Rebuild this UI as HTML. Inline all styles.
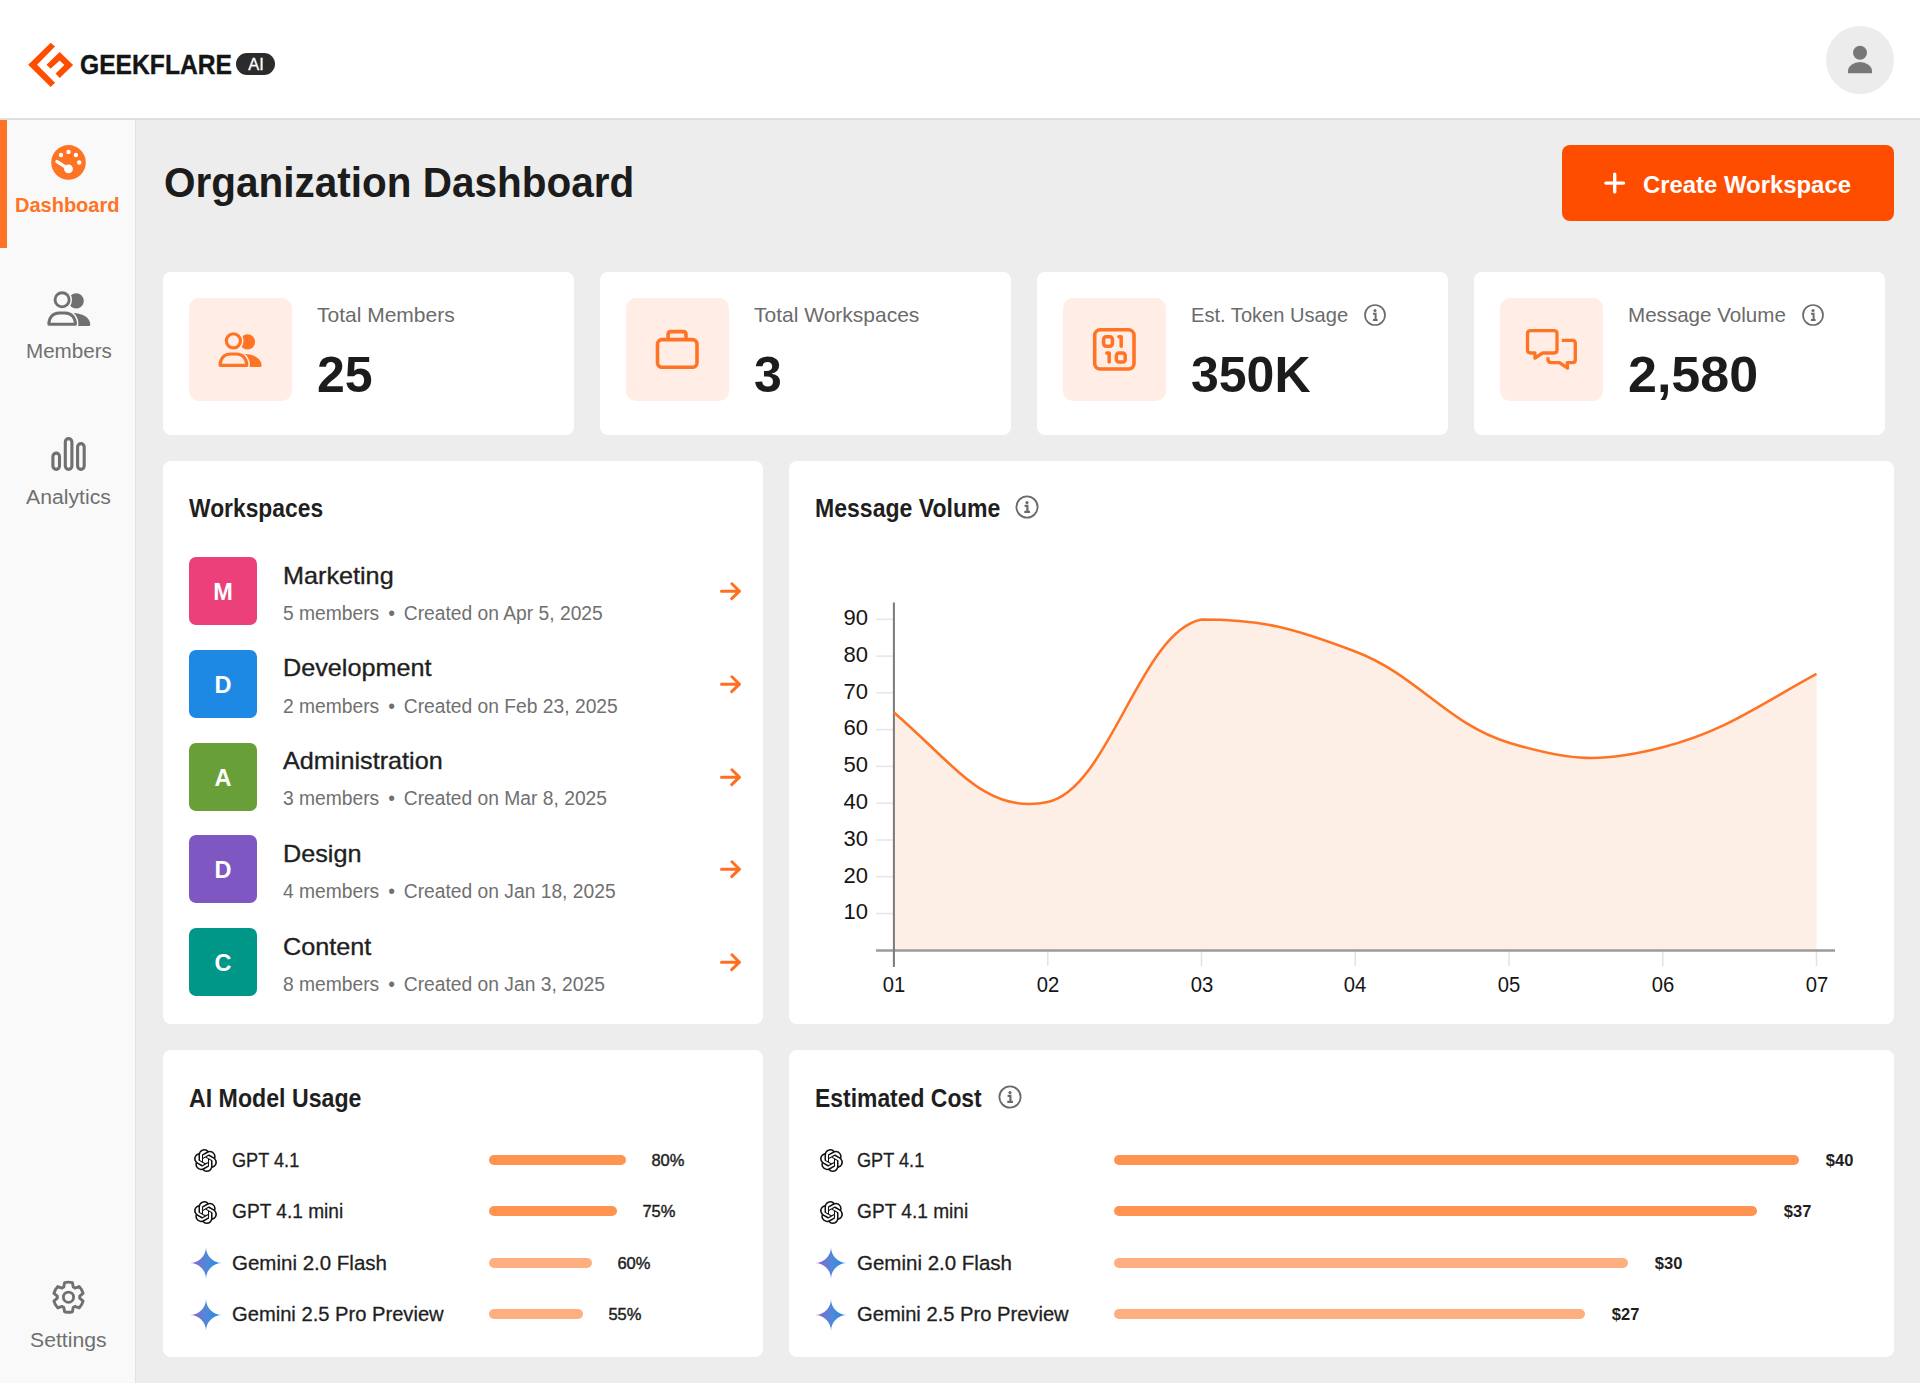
<!DOCTYPE html>
<html><head><meta charset="utf-8"><title>Organization Dashboard</title>
<style>
html,body{margin:0;padding:0;width:1920px;height:1383px;overflow:hidden;background:#ededed;font-family:"Liberation Sans",sans-serif;}
.t{position:absolute;line-height:1;white-space:nowrap;}
</style></head><body>
<div style="position:absolute;left:0px;top:0px;width:1920px;height:118px;background:#fff;border-radius:0px;"></div>
<div style="position:absolute;left:0px;top:118px;width:1920px;height:2px;background:#dedede;border-radius:0px;"></div>
<svg style="position:absolute;left:0;top:0" width="300" height="118" viewBox="0 0 300 118">
<path fill="#FF4D00" d="M50.7,42.8 L28.2,64.7 L50.7,87 L55,82.7 L37.1,64.7 L55,46.6 Z"/>
<path fill="#FF4D00" d="M46.5,64.7 L59.7,51.9 L73.1,64.9 L59.7,78 L55.6,73.6 L64.3,64.9 L59.7,60.6 L50.6,68.8 Z"/>
</svg>
<div class="t" style="left:80.0px;top:50.9px;font-size:28px;color:#151515;font-weight:bold;transform:scaleX(0.88);transform-origin:0 0;-webkit-text-stroke:0.4px #151515;">GEEKFLARE</div>
<div style="position:absolute;left:236px;top:53px;width:39px;height:22px;background:#2b2b2b;border-radius:11px;"></div>
<div class="t" style="left:248.3px;top:55.6px;font-size:16.5px;color:#fff;font-weight:normal;-webkit-text-stroke:0.3px #fff;">AI</div>
<div style="position:absolute;left:1826px;top:26px;width:68px;height:68px;background:#ececec;border-radius:34px;"></div>
<svg style="position:absolute;left:1826px;top:26px" width="68" height="68" viewBox="0 0 68 68">
<circle cx="34" cy="26.8" r="7" fill="#777"/>
<path d="M22,47.3 L22,45 A12,9 0 0 1 46,45 L46,47.3 Z" fill="#777"/>
</svg>
<div style="position:absolute;left:0px;top:120px;width:136px;height:1263px;background:#f9f9f9;border-radius:0px;"></div>
<div style="position:absolute;left:135px;top:120px;width:1px;height:1263px;background:#e2e2e2;border-radius:0px;"></div>
<div style="position:absolute;left:0px;top:120px;width:7px;height:128px;background:#FF7424;border-radius:0px;"></div>
<svg style="position:absolute;left:0;top:120px" width="136" height="380" viewBox="0 120 136 380">
<circle cx="68.5" cy="162.4" r="17.3" fill="#FF7424"/>
<circle cx="68.5" cy="151.9" r="2.2" fill="#fff"/>
<circle cx="61" cy="155" r="2.2" fill="#fff"/>
<circle cx="75.9" cy="155" r="2.2" fill="#fff"/>
<circle cx="79.2" cy="162.5" r="2.2" fill="#fff"/>
<line x1="57" y1="161.6" x2="68.5" y2="168.9" stroke="#fff" stroke-width="3.4" stroke-linecap="round"/>
<circle cx="68.5" cy="168.9" r="4.4" fill="#fff"/>
<g transform="translate(62.1,299.8) scale(1.0)">
<circle cx="14.1" cy="1.1" r="7.6" fill="#707070"/>
<path d="M8,13 C21,13 27.8,18 28.2,24.6 Q28.2,26.1 26.6,26.1 L8,26.1 Z" fill="#707070"/>
<circle cx="0" cy="0" r="7.05" fill="#f9f9f9" stroke="#f9f9f9" stroke-width="5.9"/>
<path d="M-13.3,24.5 C-13.3,18 -9.5,13.2 -3,13.2 L3,13.2 C9.5,13.2 13.4,18 13.4,24.5 Z" fill="#f9f9f9" stroke="#f9f9f9" stroke-width="5.9" stroke-linejoin="round"/>
<circle cx="0" cy="0" r="7.05" fill="none" stroke="#707070" stroke-width="2.9"/>
<path d="M-13.3,24.5 C-13.3,18 -9.5,13.2 -3,13.2 L3,13.2 C9.5,13.2 13.4,18 13.4,24.5 Z" fill="none" stroke="#707070" stroke-width="2.9" stroke-linejoin="round"/>
</g>
<rect x="52.9" y="453.1" width="6.6" height="16.3" rx="3.3" fill="none" stroke="#707070" stroke-width="3.1"/>
<rect x="65.3" y="438.6" width="6.6" height="30.8" rx="3.3" fill="none" stroke="#707070" stroke-width="3.1"/>
<rect x="77.6" y="443.6" width="6.6" height="25.8" rx="3.3" fill="none" stroke="#707070" stroke-width="3.1"/>
</svg>
<div class="t" style="left:15.0px;top:195.4px;font-size:20px;color:#FF7424;font-weight:bold;">Dashboard</div>
<div class="t" style="left:25.8px;top:341.4px;font-size:20px;color:#707070;font-weight:normal;transform:scaleX(1.03);transform-origin:0 0;">Members</div>
<div class="t" style="left:25.8px;top:486.8px;font-size:20px;color:#707070;font-weight:normal;transform:scaleX(1.06);transform-origin:0 0;">Analytics</div>
<svg style="position:absolute;left:0;top:1240px" width="136" height="120" viewBox="0 1240 136 120">
<path fill="none" stroke="#707070" stroke-width="2.9" stroke-linejoin="round" d="M63.77,1287.05 L64.59,1282.61 A15.1,15.1 0 0 1 72.41,1282.61 L73.23,1287.05 A11.2,11.2 0 0 1 74.92,1288.03 L79.18,1286.52 A15.1,15.1 0 0 1 83.09,1293.29 L79.66,1296.22 A11.2,11.2 0 0 1 79.66,1298.18 L83.09,1301.11 A15.1,15.1 0 0 1 79.18,1307.88 L74.92,1306.37 A11.2,11.2 0 0 1 73.23,1307.35 L72.41,1311.79 A15.1,15.1 0 0 1 64.59,1311.79 L63.77,1307.35 A11.2,11.2 0 0 1 62.08,1306.37 L57.82,1307.88 A15.1,15.1 0 0 1 53.91,1301.11 L57.34,1298.18 A11.2,11.2 0 0 1 57.34,1296.22 L53.91,1293.29 A15.1,15.1 0 0 1 57.82,1286.52 L62.08,1288.03 A11.2,11.2 0 0 1 63.77,1287.05 Z"/>
<circle cx="68.5" cy="1297.2" r="5.1" fill="none" stroke="#707070" stroke-width="2.8"/>
</svg>
<div class="t" style="left:30.0px;top:1330.4px;font-size:20px;color:#707070;font-weight:normal;transform:scaleX(1.06);transform-origin:0 0;">Settings</div>
<div class="t" style="left:164.0px;top:161.7px;font-size:42px;color:#1c1c1c;font-weight:bold;transform:scaleX(0.964);transform-origin:0 0;">Organization Dashboard</div>
<div style="position:absolute;left:1562px;top:145px;width:332px;height:76px;background:#FF4D00;border-radius:8px;"></div>
<svg style="position:absolute;left:1600px;top:168px" width="30" height="30" viewBox="0 0 30 30">
<path d="M14.7,6.3 V23.9 M5.9,15.1 H23.5" stroke="#fff" stroke-width="3.4" stroke-linecap="round"/>
</svg>
<div class="t" style="left:1643.0px;top:172.9px;font-size:24px;color:#fff;font-weight:bold;transform:scaleX(0.995);transform-origin:0 0;">Create Workspace</div>
<div style="position:absolute;left:163px;top:272px;width:411px;height:163px;background:#fff;border-radius:8px;"></div>
<div style="position:absolute;left:189px;top:298px;width:103px;height:103px;background:#FFEDE6;border-radius:10px;"></div>
<svg style="position:absolute;left:189px;top:298px" width="103" height="103" viewBox="0 0 103 103"><g transform="translate(44.4,42.8) scale(1.0)">
<circle cx="14.1" cy="1.1" r="7.6" fill="#FF7424"/>
<path d="M8,13 C21,13 27.8,18 28.2,24.6 Q28.2,26.1 26.6,26.1 L8,26.1 Z" fill="#FF7424"/>
<circle cx="0" cy="0" r="7.05" fill="#FFEDE6" stroke="#FFEDE6" stroke-width="6.2"/>
<path d="M-13.3,24.5 C-13.3,18 -9.5,13.2 -3,13.2 L3,13.2 C9.5,13.2 13.4,18 13.4,24.5 Z" fill="#FFEDE6" stroke="#FFEDE6" stroke-width="6.2" stroke-linejoin="round"/>
<circle cx="0" cy="0" r="7.05" fill="none" stroke="#FF7424" stroke-width="3.2"/>
<path d="M-13.3,24.5 C-13.3,18 -9.5,13.2 -3,13.2 L3,13.2 C9.5,13.2 13.4,18 13.4,24.5 Z" fill="none" stroke="#FF7424" stroke-width="3.2" stroke-linejoin="round"/>
</g></svg>
<div class="t" style="left:317.0px;top:304.3px;font-size:21px;color:#6b6b6b;font-weight:normal;transform:scaleX(1.0);transform-origin:0 0;">Total Members</div>
<div class="t" style="left:317.0px;top:349.7px;font-size:50px;color:#1c1c1c;font-weight:bold;">25</div>
<div style="position:absolute;left:600px;top:272px;width:411px;height:163px;background:#fff;border-radius:8px;"></div>
<div style="position:absolute;left:626px;top:298px;width:103px;height:103px;background:#FFEDE6;border-radius:10px;"></div>
<svg style="position:absolute;left:626px;top:298px" width="103" height="103" viewBox="0 0 103 103"><rect x="31.5" y="41.6" width="39.5" height="27.6" rx="4.5" fill="none" stroke="#FF7424" stroke-width="3.6"/>
<path d="M42.1,41.6 V36.4 Q42.1,33.6 45,33.6 H57.1 Q60,33.6 60,36.4 V41.6" fill="none" stroke="#FF7424" stroke-width="3.6"/></svg>
<div class="t" style="left:754.0px;top:304.3px;font-size:21px;color:#6b6b6b;font-weight:normal;transform:scaleX(1.0);transform-origin:0 0;">Total Workspaces</div>
<div class="t" style="left:754.0px;top:349.7px;font-size:50px;color:#1c1c1c;font-weight:bold;">3</div>
<div style="position:absolute;left:1037px;top:272px;width:411px;height:163px;background:#fff;border-radius:8px;"></div>
<div style="position:absolute;left:1063px;top:298px;width:103px;height:103px;background:#FFEDE6;border-radius:10px;"></div>
<svg style="position:absolute;left:1063px;top:298px" width="103" height="103" viewBox="0 0 103 103"><rect x="31.7" y="31.8" width="39.3" height="39.2" rx="5.5" fill="none" stroke="#FF7424" stroke-width="3.6"/>
<rect x="40.6" y="38.8" width="8.8" height="9.4" rx="2.6" fill="none" stroke="#FF7424" stroke-width="3.5"/>
<path d="M55.9,38.8 H58.2 V48.2" fill="none" stroke="#FF7424" stroke-width="3.5" stroke-linecap="round" stroke-linejoin="round"/>
<path d="M43.8,55.1 H46.2 V64" fill="none" stroke="#FF7424" stroke-width="3.5" stroke-linecap="round" stroke-linejoin="round"/>
<rect x="53.4" y="55.1" width="8.8" height="9" rx="2.6" fill="none" stroke="#FF7424" stroke-width="3.5"/></svg>
<div class="t" style="left:1191.0px;top:304.3px;font-size:21px;color:#6b6b6b;font-weight:normal;transform:scaleX(0.957);transform-origin:0 0;">Est. Token Usage</div>
<div class="t" style="left:1191.0px;top:349.7px;font-size:50px;color:#1c1c1c;font-weight:bold;">350K</div>
<svg style="position:absolute;left:1362.5px;top:303px" width="24" height="24" viewBox="0 0 24 24">
<circle cx="12" cy="12" r="10" fill="none" stroke="#6b6b6b" stroke-width="1.7"/>
<circle cx="12" cy="7.6" r="1.5" fill="#6b6b6b"/>
<path d="M10,10.8 H12.6 V16.9 M9.9,17 H14.6" fill="none" stroke="#6b6b6b" stroke-width="2"/>
</svg>
<div style="position:absolute;left:1474px;top:272px;width:411px;height:163px;background:#fff;border-radius:8px;"></div>
<div style="position:absolute;left:1500px;top:298px;width:103px;height:103px;background:#FFEDE6;border-radius:10px;"></div>
<svg style="position:absolute;left:1500px;top:298px" width="103" height="103" viewBox="0 0 103 103"><path d="M30.8,32.6 H54 Q57,32.6 57,35.6 V52 Q57,55 54,55 H42.7 L35,60 L34.9,55 H30.8 Q27.5,55 27.5,52 V35.6 Q27.5,32.6 30.8,32.6 Z" fill="none" stroke="#FF7424" stroke-width="3.3" stroke-linejoin="round"/>
<path d="M61.8,42.4 H72.4 Q75.3,42.4 75.3,45.4 V61.7 Q75.3,64.7 72.3,64.7 H67.2 L67.6,70.2 L59.4,64.7 H51.5 Q47.9,64.7 47.9,61 V59.3" fill="none" stroke="#FF7424" stroke-width="3.3" stroke-linejoin="round" stroke-linecap="butt"/></svg>
<div class="t" style="left:1628.0px;top:304.3px;font-size:21px;color:#6b6b6b;font-weight:normal;transform:scaleX(0.98);transform-origin:0 0;">Message Volume</div>
<div class="t" style="left:1628.0px;top:349.7px;font-size:50px;color:#1c1c1c;font-weight:bold;transform:scaleX(1.04);transform-origin:0 0;">2,580</div>
<svg style="position:absolute;left:1801.3px;top:303px" width="24" height="24" viewBox="0 0 24 24">
<circle cx="12" cy="12" r="10" fill="none" stroke="#6b6b6b" stroke-width="1.7"/>
<circle cx="12" cy="7.6" r="1.5" fill="#6b6b6b"/>
<path d="M10,10.8 H12.6 V16.9 M9.9,17 H14.6" fill="none" stroke="#6b6b6b" stroke-width="2"/>
</svg>
<div style="position:absolute;left:163px;top:461px;width:600px;height:563px;background:#fff;border-radius:8px;"></div>
<div class="t" style="left:189.0px;top:494.6px;font-size:26px;color:#1f1f1f;font-weight:bold;transform:scaleX(0.878);transform-origin:0 0;">Workspaces</div>
<div style="position:absolute;left:189px;top:557.0px;width:68px;height:68px;background:#EC407A;border-radius:7px;"></div>
<div class="t" style="left:189px;top:558.0px;width:68px;height:68px;line-height:68px;text-align:center;font-size:23.5px;font-weight:bold;color:#fff">M</div>
<div class="t" style="left:283.0px;top:563.5px;font-size:24px;color:#1f1f1f;font-weight:normal;transform:scaleX(1.05);transform-origin:0 0;-webkit-text-stroke:0.35px #1f1f1f;">Marketing</div>
<div class="t" style="left:283.0px;top:603.7px;font-size:19.6px;color:#707070;font-weight:normal;transform:scaleX(0.982);transform-origin:0 0;">5 members<span style="display:inline-block;width:25px;text-align:center">•</span>Created on Apr 5, 2025</div>
<svg style="position:absolute;left:716px;top:579.0px" width="28" height="24" viewBox="0 0 28 24">
<path d="M5.5,12.2 H23.5 M15.9,4.8 L23.5,12.2 L15.7,19.6" fill="none" stroke="#FF6F1F" stroke-width="3" stroke-linecap="round" stroke-linejoin="round"/>
</svg>
<div style="position:absolute;left:189px;top:649.8px;width:68px;height:68px;background:#1E88E5;border-radius:7px;"></div>
<div class="t" style="left:189px;top:650.8px;width:68px;height:68px;line-height:68px;text-align:center;font-size:23.5px;font-weight:bold;color:#fff">D</div>
<div class="t" style="left:283.0px;top:656.2px;font-size:24px;color:#1f1f1f;font-weight:normal;transform:scaleX(1.05);transform-origin:0 0;-webkit-text-stroke:0.35px #1f1f1f;">Development</div>
<div class="t" style="left:283.0px;top:696.5px;font-size:19.6px;color:#707070;font-weight:normal;transform:scaleX(0.982);transform-origin:0 0;">2 members<span style="display:inline-block;width:25px;text-align:center">•</span>Created on Feb 23, 2025</div>
<svg style="position:absolute;left:716px;top:671.8px" width="28" height="24" viewBox="0 0 28 24">
<path d="M5.5,12.2 H23.5 M15.9,4.8 L23.5,12.2 L15.7,19.6" fill="none" stroke="#FF6F1F" stroke-width="3" stroke-linecap="round" stroke-linejoin="round"/>
</svg>
<div style="position:absolute;left:189px;top:742.5px;width:68px;height:68px;background:#689F38;border-radius:7px;"></div>
<div class="t" style="left:189px;top:743.5px;width:68px;height:68px;line-height:68px;text-align:center;font-size:23.5px;font-weight:bold;color:#fff">A</div>
<div class="t" style="left:283.0px;top:749.0px;font-size:24px;color:#1f1f1f;font-weight:normal;transform:scaleX(1.05);transform-origin:0 0;-webkit-text-stroke:0.35px #1f1f1f;">Administration</div>
<div class="t" style="left:283.0px;top:789.2px;font-size:19.6px;color:#707070;font-weight:normal;transform:scaleX(0.982);transform-origin:0 0;">3 members<span style="display:inline-block;width:25px;text-align:center">•</span>Created on Mar 8, 2025</div>
<svg style="position:absolute;left:716px;top:764.5px" width="28" height="24" viewBox="0 0 28 24">
<path d="M5.5,12.2 H23.5 M15.9,4.8 L23.5,12.2 L15.7,19.6" fill="none" stroke="#FF6F1F" stroke-width="3" stroke-linecap="round" stroke-linejoin="round"/>
</svg>
<div style="position:absolute;left:189px;top:835.2px;width:68px;height:68px;background:#7E57C2;border-radius:7px;"></div>
<div class="t" style="left:189px;top:836.2px;width:68px;height:68px;line-height:68px;text-align:center;font-size:23.5px;font-weight:bold;color:#fff">D</div>
<div class="t" style="left:283.0px;top:841.7px;font-size:24px;color:#1f1f1f;font-weight:normal;transform:scaleX(1.05);transform-origin:0 0;-webkit-text-stroke:0.35px #1f1f1f;">Design</div>
<div class="t" style="left:283.0px;top:882.0px;font-size:19.6px;color:#707070;font-weight:normal;transform:scaleX(0.982);transform-origin:0 0;">4 members<span style="display:inline-block;width:25px;text-align:center">•</span>Created on Jan 18, 2025</div>
<svg style="position:absolute;left:716px;top:857.2px" width="28" height="24" viewBox="0 0 28 24">
<path d="M5.5,12.2 H23.5 M15.9,4.8 L23.5,12.2 L15.7,19.6" fill="none" stroke="#FF6F1F" stroke-width="3" stroke-linecap="round" stroke-linejoin="round"/>
</svg>
<div style="position:absolute;left:189px;top:928.0px;width:68px;height:68px;background:#009688;border-radius:7px;"></div>
<div class="t" style="left:189px;top:929.0px;width:68px;height:68px;line-height:68px;text-align:center;font-size:23.5px;font-weight:bold;color:#fff">C</div>
<div class="t" style="left:283.0px;top:934.5px;font-size:24px;color:#1f1f1f;font-weight:normal;transform:scaleX(1.05);transform-origin:0 0;-webkit-text-stroke:0.35px #1f1f1f;">Content</div>
<div class="t" style="left:283.0px;top:974.7px;font-size:19.6px;color:#707070;font-weight:normal;transform:scaleX(0.982);transform-origin:0 0;">8 members<span style="display:inline-block;width:25px;text-align:center">•</span>Created on Jan 3, 2025</div>
<svg style="position:absolute;left:716px;top:950.0px" width="28" height="24" viewBox="0 0 28 24">
<path d="M5.5,12.2 H23.5 M15.9,4.8 L23.5,12.2 L15.7,19.6" fill="none" stroke="#FF6F1F" stroke-width="3" stroke-linecap="round" stroke-linejoin="round"/>
</svg>
<div style="position:absolute;left:789px;top:461px;width:1105px;height:563px;background:#fff;border-radius:8px;"></div>
<div class="t" style="left:815.0px;top:495.0px;font-size:26px;color:#1f1f1f;font-weight:bold;transform:scaleX(0.887);transform-origin:0 0;">Message Volume</div>
<svg style="position:absolute;left:1014.8px;top:495px" width="24" height="24" viewBox="0 0 24 24">
<circle cx="12" cy="12" r="10.6" fill="none" stroke="#6b6b6b" stroke-width="1.8"/>
<circle cx="12" cy="7.6" r="1.6" fill="#6b6b6b"/>
<path d="M9.6,10.8 H12.4 V16.9 M9.3,16.9 H15" fill="none" stroke="#6b6b6b" stroke-width="2.2"/>
</svg>
<svg style="position:absolute;left:0;top:0" width="1920" height="1383" viewBox="0 0 1920 1383">
<path d="M894.0,712.4 C955.5,765.5 986.2,815.1 1047.8,802.0 C1109.2,788.9 1140.0,631.6 1201.5,619.5 C1263.0,619.5 1293.8,628.2 1355.2,651.5 C1416.8,674.7 1447.5,724.2 1509.0,742.7 C1570.5,761.2 1601.2,763.1 1662.8,747.2 C1724.2,731.3 1755.0,707.6 1816.5,673.9 L1816.5,950.3 L894,950.3 Z" fill="#FDEEE6"/>
<line x1="876" y1="913.5" x2="893" y2="913.5" stroke="#e6e6e6" stroke-width="1.5"/><line x1="876" y1="876.7" x2="893" y2="876.7" stroke="#e6e6e6" stroke-width="1.5"/><line x1="876" y1="840.0" x2="893" y2="840.0" stroke="#e6e6e6" stroke-width="1.5"/><line x1="876" y1="803.2" x2="893" y2="803.2" stroke="#e6e6e6" stroke-width="1.5"/><line x1="876" y1="766.4" x2="893" y2="766.4" stroke="#e6e6e6" stroke-width="1.5"/><line x1="876" y1="729.6" x2="893" y2="729.6" stroke="#e6e6e6" stroke-width="1.5"/><line x1="876" y1="692.8" x2="893" y2="692.8" stroke="#e6e6e6" stroke-width="1.5"/><line x1="876" y1="656.1" x2="893" y2="656.1" stroke="#e6e6e6" stroke-width="1.5"/><line x1="876" y1="619.3" x2="893" y2="619.3" stroke="#e6e6e6" stroke-width="1.5"/><line x1="1047.8" y1="951" x2="1047.8" y2="966" stroke="#e3e3e3" stroke-width="1.5"/><line x1="1201.5" y1="951" x2="1201.5" y2="966" stroke="#e3e3e3" stroke-width="1.5"/><line x1="1355.2" y1="951" x2="1355.2" y2="966" stroke="#e3e3e3" stroke-width="1.5"/><line x1="1509.0" y1="951" x2="1509.0" y2="966" stroke="#e3e3e3" stroke-width="1.5"/><line x1="1662.8" y1="951" x2="1662.8" y2="966" stroke="#e3e3e3" stroke-width="1.5"/><line x1="1816.5" y1="951" x2="1816.5" y2="966" stroke="#e3e3e3" stroke-width="1.5"/>
<line x1="876" y1="950.5" x2="1835" y2="950.5" stroke="#9e9a9a" stroke-width="2.6"/>
<line x1="893.9" y1="602.5" x2="893.9" y2="967" stroke="#7a7a7a" stroke-width="2"/>
<path d="M894.0,712.4 C955.5,765.5 986.2,815.1 1047.8,802.0 C1109.2,788.9 1140.0,631.6 1201.5,619.5 C1263.0,619.5 1293.8,628.2 1355.2,651.5 C1416.8,674.7 1447.5,724.2 1509.0,742.7 C1570.5,761.2 1601.2,763.1 1662.8,747.2 C1724.2,731.3 1755.0,707.6 1816.5,673.9" fill="none" stroke="#FF7424" stroke-width="2.6"/>
</svg>
<div class="t" style="left:780px;width:88px;text-align:right;top:901.2px;font-size:22px;color:#151515">10</div>
<div class="t" style="left:780px;width:88px;text-align:right;top:864.5px;font-size:22px;color:#151515">20</div>
<div class="t" style="left:780px;width:88px;text-align:right;top:827.7px;font-size:22px;color:#151515">30</div>
<div class="t" style="left:780px;width:88px;text-align:right;top:790.9px;font-size:22px;color:#151515">40</div>
<div class="t" style="left:780px;width:88px;text-align:right;top:754.1px;font-size:22px;color:#151515">50</div>
<div class="t" style="left:780px;width:88px;text-align:right;top:717.3px;font-size:22px;color:#151515">60</div>
<div class="t" style="left:780px;width:88px;text-align:right;top:680.6px;font-size:22px;color:#151515">70</div>
<div class="t" style="left:780px;width:88px;text-align:right;top:643.8px;font-size:22px;color:#151515">80</div>
<div class="t" style="left:780px;width:88px;text-align:right;top:607.0px;font-size:22px;color:#151515">90</div>
<div class="t" style="left:864.0px;width:60px;text-align:center;top:974.4px;font-size:22px;color:#151515;transform:scaleX(0.92)">01</div>
<div class="t" style="left:1017.8px;width:60px;text-align:center;top:974.4px;font-size:22px;color:#151515;transform:scaleX(0.92)">02</div>
<div class="t" style="left:1171.5px;width:60px;text-align:center;top:974.4px;font-size:22px;color:#151515;transform:scaleX(0.92)">03</div>
<div class="t" style="left:1325.2px;width:60px;text-align:center;top:974.4px;font-size:22px;color:#151515;transform:scaleX(0.92)">04</div>
<div class="t" style="left:1479.0px;width:60px;text-align:center;top:974.4px;font-size:22px;color:#151515;transform:scaleX(0.92)">05</div>
<div class="t" style="left:1632.8px;width:60px;text-align:center;top:974.4px;font-size:22px;color:#151515;transform:scaleX(0.92)">06</div>
<div class="t" style="left:1786.5px;width:60px;text-align:center;top:974.4px;font-size:22px;color:#151515;transform:scaleX(0.92)">07</div>
<div style="position:absolute;left:163px;top:1050px;width:600px;height:307px;background:#fff;border-radius:8px;"></div>
<div class="t" style="left:189.0px;top:1084.6px;font-size:26px;color:#1f1f1f;font-weight:bold;transform:scaleX(0.891);transform-origin:0 0;">AI Model Usage</div>
<svg style="position:absolute;left:194.2px;top:1149.1px" width="23" height="23" viewBox="0 0 24 24"><path fill="#111" d="M22.2819 9.8211a5.9847 5.9847 0 0 0-.5157-4.9108 6.0462 6.0462 0 0 0-6.5098-2.9A6.0651 6.0651 0 0 0 4.9807 4.1818a5.9847 5.9847 0 0 0-3.9977 2.9 6.0462 6.0462 0 0 0 .7427 7.0966 5.98 5.98 0 0 0 .511 4.9107 6.051 6.051 0 0 0 6.5146 2.9001A5.9847 5.9847 0 0 0 13.2599 24a6.0557 6.0557 0 0 0 5.7718-4.2058 5.9894 5.9894 0 0 0 3.9977-2.9001 6.0557 6.0557 0 0 0-.7475-7.0729zm-9.022 12.6081a4.4755 4.4755 0 0 1-2.8764-1.0408l.1419-.0804 4.7783-2.7582a.7948.7948 0 0 0 .3927-.6813v-6.7369l2.02 1.1686a.071.071 0 0 1 .038.052v5.5826a4.504 4.504 0 0 1-4.4945 4.4944zm-9.6607-4.1254a4.4708 4.4708 0 0 1-.5346-3.0137l.142.0852 4.783 2.7582a.7712.7712 0 0 0 .7806 0l5.8428-3.3685v2.3324a.0804.0804 0 0 1-.0332.0615L9.74 19.9502a4.4992 4.4992 0 0 1-6.1408-1.6464zM2.3408 7.8956a4.485 4.485 0 0 1 2.3655-1.9728V11.6a.7664.7664 0 0 0 .3879.6765l5.8144 3.3543-2.0201 1.1685a.0757.0757 0 0 1-.071 0l-4.8303-2.7865A4.504 4.504 0 0 1 2.3408 7.872zm16.5963 3.8558L13.1038 8.364 15.1192 7.2a.0757.0757 0 0 1 .071 0l4.8303 2.7913a4.4944 4.4944 0 0 1-.6765 8.1042v-5.6772a.79.79 0 0 0-.407-.667zm2.0107-3.0231l-.142-.0852-4.7735-2.7818a.7759.7759 0 0 0-.7854 0L9.409 9.2297V6.8974a.0662.0662 0 0 1 .0284-.0615l4.8303-2.7866a4.4992 4.4992 0 0 1 6.6802 4.66zM8.3065 12.863l-2.02-1.1638a.0804.0804 0 0 1-.038-.0567V6.0742a4.4992 4.4992 0 0 1 7.3757-3.4537l-.142.0805L8.704 5.459a.7948.7948 0 0 0-.3927.6813zm1.0976-2.3654l2.602-1.4998 2.6069 1.4998v2.9994l-2.5974 1.4997-2.6067-1.4997Z"/></svg>
<div class="t" style="left:232.0px;top:1149.9px;font-size:20.5px;color:#1f1f1f;font-weight:normal;transform:scaleX(0.885);transform-origin:0 0;-webkit-text-stroke:0.3px #1f1f1f;">GPT 4.1</div>
<div style="position:absolute;left:488.6px;top:1154.8px;width:137px;height:10px;background:#FF9350;border-radius:5px;"></div>
<div class="t" style="left:651.4px;top:1151.8px;font-size:16.5px;color:#1f1f1f;font-weight:normal;-webkit-text-stroke:0.45px #1f1f1f;">80%</div>
<svg style="position:absolute;left:194.2px;top:1200.5px" width="23" height="23" viewBox="0 0 24 24"><path fill="#111" d="M22.2819 9.8211a5.9847 5.9847 0 0 0-.5157-4.9108 6.0462 6.0462 0 0 0-6.5098-2.9A6.0651 6.0651 0 0 0 4.9807 4.1818a5.9847 5.9847 0 0 0-3.9977 2.9 6.0462 6.0462 0 0 0 .7427 7.0966 5.98 5.98 0 0 0 .511 4.9107 6.051 6.051 0 0 0 6.5146 2.9001A5.9847 5.9847 0 0 0 13.2599 24a6.0557 6.0557 0 0 0 5.7718-4.2058 5.9894 5.9894 0 0 0 3.9977-2.9001 6.0557 6.0557 0 0 0-.7475-7.0729zm-9.022 12.6081a4.4755 4.4755 0 0 1-2.8764-1.0408l.1419-.0804 4.7783-2.7582a.7948.7948 0 0 0 .3927-.6813v-6.7369l2.02 1.1686a.071.071 0 0 1 .038.052v5.5826a4.504 4.504 0 0 1-4.4945 4.4944zm-9.6607-4.1254a4.4708 4.4708 0 0 1-.5346-3.0137l.142.0852 4.783 2.7582a.7712.7712 0 0 0 .7806 0l5.8428-3.3685v2.3324a.0804.0804 0 0 1-.0332.0615L9.74 19.9502a4.4992 4.4992 0 0 1-6.1408-1.6464zM2.3408 7.8956a4.485 4.485 0 0 1 2.3655-1.9728V11.6a.7664.7664 0 0 0 .3879.6765l5.8144 3.3543-2.0201 1.1685a.0757.0757 0 0 1-.071 0l-4.8303-2.7865A4.504 4.504 0 0 1 2.3408 7.872zm16.5963 3.8558L13.1038 8.364 15.1192 7.2a.0757.0757 0 0 1 .071 0l4.8303 2.7913a4.4944 4.4944 0 0 1-.6765 8.1042v-5.6772a.79.79 0 0 0-.407-.667zm2.0107-3.0231l-.142-.0852-4.7735-2.7818a.7759.7759 0 0 0-.7854 0L9.409 9.2297V6.8974a.0662.0662 0 0 1 .0284-.0615l4.8303-2.7866a4.4992 4.4992 0 0 1 6.6802 4.66zM8.3065 12.863l-2.02-1.1638a.0804.0804 0 0 1-.038-.0567V6.0742a4.4992 4.4992 0 0 1 7.3757-3.4537l-.142.0805L8.704 5.459a.7948.7948 0 0 0-.3927.6813zm1.0976-2.3654l2.602-1.4998 2.6069 1.4998v2.9994l-2.5974 1.4997-2.6067-1.4997Z"/></svg>
<div class="t" style="left:232.0px;top:1201.4px;font-size:20.5px;color:#1f1f1f;font-weight:normal;transform:scaleX(0.933);transform-origin:0 0;-webkit-text-stroke:0.3px #1f1f1f;">GPT 4.1 mini</div>
<div style="position:absolute;left:488.6px;top:1206.2px;width:128px;height:10px;background:#FF9350;border-radius:5px;"></div>
<div class="t" style="left:642.4px;top:1203.3px;font-size:16.5px;color:#1f1f1f;font-weight:normal;-webkit-text-stroke:0.45px #1f1f1f;">75%</div>
<svg style="position:absolute;left:189.5px;top:1247.1px" width="32" height="32" viewBox="0 0 28 28"><defs><linearGradient id="g2" x1="0" y1="0.5" x2="1" y2="0.5"><stop offset="0" stop-color="#9B55D6"/><stop offset="0.3" stop-color="#6B78D6"/><stop offset="0.55" stop-color="#4C8AD8"/><stop offset="1" stop-color="#1C8BE8"/></linearGradient></defs><path fill="url(#g2)" d="M14 28C14 26.0633 13.6267 24.2433 12.88 22.54C12.1567 20.8367 11.165 19.355 9.905 18.095C8.645 16.835 7.16333 15.8433 5.46 15.12C3.75667 14.3733 1.93667 14 0 14C1.93667 14 3.75667 13.6383 5.46 12.915C7.16333 12.1683 8.645 11.165 9.905 9.905C11.165 8.645 12.1567 7.16333 12.88 5.46C13.6267 3.75667 14 1.93667 14 0C14 1.93667 14.3617 3.75667 15.085 5.46C15.8317 7.16333 16.835 8.645 18.095 9.905C19.355 11.165 20.8367 12.1683 22.54 12.915C24.2433 13.6383 26.0633 14 28 14C26.0633 14 24.2433 14.3733 22.54 15.12C20.8367 15.8433 19.355 16.835 18.095 18.095C16.835 19.355 15.8433 20.8367 15.085 22.54C14.3617 24.2433 14 26.0633 14 28Z"/></svg>
<div class="t" style="left:232.0px;top:1252.8px;font-size:20.5px;color:#1f1f1f;font-weight:normal;transform:scaleX(1.0);transform-origin:0 0;-webkit-text-stroke:0.3px #1f1f1f;">Gemini 2.0 Flash</div>
<div style="position:absolute;left:488.6px;top:1257.7px;width:103px;height:10px;background:#FFAE80;border-radius:5px;"></div>
<div class="t" style="left:617.4px;top:1254.7px;font-size:16.5px;color:#1f1f1f;font-weight:normal;-webkit-text-stroke:0.45px #1f1f1f;">60%</div>
<svg style="position:absolute;left:189.5px;top:1298.6px" width="32" height="32" viewBox="0 0 28 28"><defs><linearGradient id="g3" x1="0" y1="0.5" x2="1" y2="0.5"><stop offset="0" stop-color="#9B55D6"/><stop offset="0.3" stop-color="#6B78D6"/><stop offset="0.55" stop-color="#4C8AD8"/><stop offset="1" stop-color="#1C8BE8"/></linearGradient></defs><path fill="url(#g3)" d="M14 28C14 26.0633 13.6267 24.2433 12.88 22.54C12.1567 20.8367 11.165 19.355 9.905 18.095C8.645 16.835 7.16333 15.8433 5.46 15.12C3.75667 14.3733 1.93667 14 0 14C1.93667 14 3.75667 13.6383 5.46 12.915C7.16333 12.1683 8.645 11.165 9.905 9.905C11.165 8.645 12.1567 7.16333 12.88 5.46C13.6267 3.75667 14 1.93667 14 0C14 1.93667 14.3617 3.75667 15.085 5.46C15.8317 7.16333 16.835 8.645 18.095 9.905C19.355 11.165 20.8367 12.1683 22.54 12.915C24.2433 13.6383 26.0633 14 28 14C26.0633 14 24.2433 14.3733 22.54 15.12C20.8367 15.8433 19.355 16.835 18.095 18.095C16.835 19.355 15.8433 20.8367 15.085 22.54C14.3617 24.2433 14 26.0633 14 28Z"/></svg>
<div class="t" style="left:232.0px;top:1304.3px;font-size:20.5px;color:#1f1f1f;font-weight:normal;transform:scaleX(0.983);transform-origin:0 0;-webkit-text-stroke:0.3px #1f1f1f;">Gemini 2.5 Pro Preview</div>
<div style="position:absolute;left:488.6px;top:1309.2px;width:94px;height:10px;background:#FFAE80;border-radius:5px;"></div>
<div class="t" style="left:608.4px;top:1306.2px;font-size:16.5px;color:#1f1f1f;font-weight:normal;-webkit-text-stroke:0.45px #1f1f1f;">55%</div>
<div style="position:absolute;left:789px;top:1050px;width:1105px;height:307px;background:#fff;border-radius:8px;"></div>
<div class="t" style="left:815.3px;top:1084.6px;font-size:26px;color:#1f1f1f;font-weight:bold;transform:scaleX(0.881);transform-origin:0 0;">Estimated Cost</div>
<svg style="position:absolute;left:997.5px;top:1085px" width="24" height="24" viewBox="0 0 24 24">
<circle cx="12" cy="12" r="10.6" fill="none" stroke="#6b6b6b" stroke-width="1.8"/>
<circle cx="12" cy="7.6" r="1.6" fill="#6b6b6b"/>
<path d="M9.6,10.8 H12.4 V16.9 M9.3,16.9 H15" fill="none" stroke="#6b6b6b" stroke-width="2.2"/>
</svg>
<svg style="position:absolute;left:820px;top:1149.1px" width="23" height="23" viewBox="0 0 24 24"><path fill="#111" d="M22.2819 9.8211a5.9847 5.9847 0 0 0-.5157-4.9108 6.0462 6.0462 0 0 0-6.5098-2.9A6.0651 6.0651 0 0 0 4.9807 4.1818a5.9847 5.9847 0 0 0-3.9977 2.9 6.0462 6.0462 0 0 0 .7427 7.0966 5.98 5.98 0 0 0 .511 4.9107 6.051 6.051 0 0 0 6.5146 2.9001A5.9847 5.9847 0 0 0 13.2599 24a6.0557 6.0557 0 0 0 5.7718-4.2058 5.9894 5.9894 0 0 0 3.9977-2.9001 6.0557 6.0557 0 0 0-.7475-7.0729zm-9.022 12.6081a4.4755 4.4755 0 0 1-2.8764-1.0408l.1419-.0804 4.7783-2.7582a.7948.7948 0 0 0 .3927-.6813v-6.7369l2.02 1.1686a.071.071 0 0 1 .038.052v5.5826a4.504 4.504 0 0 1-4.4945 4.4944zm-9.6607-4.1254a4.4708 4.4708 0 0 1-.5346-3.0137l.142.0852 4.783 2.7582a.7712.7712 0 0 0 .7806 0l5.8428-3.3685v2.3324a.0804.0804 0 0 1-.0332.0615L9.74 19.9502a4.4992 4.4992 0 0 1-6.1408-1.6464zM2.3408 7.8956a4.485 4.485 0 0 1 2.3655-1.9728V11.6a.7664.7664 0 0 0 .3879.6765l5.8144 3.3543-2.0201 1.1685a.0757.0757 0 0 1-.071 0l-4.8303-2.7865A4.504 4.504 0 0 1 2.3408 7.872zm16.5963 3.8558L13.1038 8.364 15.1192 7.2a.0757.0757 0 0 1 .071 0l4.8303 2.7913a4.4944 4.4944 0 0 1-.6765 8.1042v-5.6772a.79.79 0 0 0-.407-.667zm2.0107-3.0231l-.142-.0852-4.7735-2.7818a.7759.7759 0 0 0-.7854 0L9.409 9.2297V6.8974a.0662.0662 0 0 1 .0284-.0615l4.8303-2.7866a4.4992 4.4992 0 0 1 6.6802 4.66zM8.3065 12.863l-2.02-1.1638a.0804.0804 0 0 1-.038-.0567V6.0742a4.4992 4.4992 0 0 1 7.3757-3.4537l-.142.0805L8.704 5.459a.7948.7948 0 0 0-.3927.6813zm1.0976-2.3654l2.602-1.4998 2.6069 1.4998v2.9994l-2.5974 1.4997-2.6067-1.4997Z"/></svg>
<div class="t" style="left:857.0px;top:1149.9px;font-size:20.5px;color:#1f1f1f;font-weight:normal;transform:scaleX(0.885);transform-origin:0 0;-webkit-text-stroke:0.3px #1f1f1f;">GPT 4.1</div>
<div style="position:absolute;left:1114.3px;top:1154.8px;width:685px;height:10px;background:#FF9350;border-radius:5px;"></div>
<div class="t" style="left:1825.8px;top:1151.8px;font-size:16.5px;color:#1f1f1f;font-weight:bold;">$40</div>
<svg style="position:absolute;left:820px;top:1200.5px" width="23" height="23" viewBox="0 0 24 24"><path fill="#111" d="M22.2819 9.8211a5.9847 5.9847 0 0 0-.5157-4.9108 6.0462 6.0462 0 0 0-6.5098-2.9A6.0651 6.0651 0 0 0 4.9807 4.1818a5.9847 5.9847 0 0 0-3.9977 2.9 6.0462 6.0462 0 0 0 .7427 7.0966 5.98 5.98 0 0 0 .511 4.9107 6.051 6.051 0 0 0 6.5146 2.9001A5.9847 5.9847 0 0 0 13.2599 24a6.0557 6.0557 0 0 0 5.7718-4.2058 5.9894 5.9894 0 0 0 3.9977-2.9001 6.0557 6.0557 0 0 0-.7475-7.0729zm-9.022 12.6081a4.4755 4.4755 0 0 1-2.8764-1.0408l.1419-.0804 4.7783-2.7582a.7948.7948 0 0 0 .3927-.6813v-6.7369l2.02 1.1686a.071.071 0 0 1 .038.052v5.5826a4.504 4.504 0 0 1-4.4945 4.4944zm-9.6607-4.1254a4.4708 4.4708 0 0 1-.5346-3.0137l.142.0852 4.783 2.7582a.7712.7712 0 0 0 .7806 0l5.8428-3.3685v2.3324a.0804.0804 0 0 1-.0332.0615L9.74 19.9502a4.4992 4.4992 0 0 1-6.1408-1.6464zM2.3408 7.8956a4.485 4.485 0 0 1 2.3655-1.9728V11.6a.7664.7664 0 0 0 .3879.6765l5.8144 3.3543-2.0201 1.1685a.0757.0757 0 0 1-.071 0l-4.8303-2.7865A4.504 4.504 0 0 1 2.3408 7.872zm16.5963 3.8558L13.1038 8.364 15.1192 7.2a.0757.0757 0 0 1 .071 0l4.8303 2.7913a4.4944 4.4944 0 0 1-.6765 8.1042v-5.6772a.79.79 0 0 0-.407-.667zm2.0107-3.0231l-.142-.0852-4.7735-2.7818a.7759.7759 0 0 0-.7854 0L9.409 9.2297V6.8974a.0662.0662 0 0 1 .0284-.0615l4.8303-2.7866a4.4992 4.4992 0 0 1 6.6802 4.66zM8.3065 12.863l-2.02-1.1638a.0804.0804 0 0 1-.038-.0567V6.0742a4.4992 4.4992 0 0 1 7.3757-3.4537l-.142.0805L8.704 5.459a.7948.7948 0 0 0-.3927.6813zm1.0976-2.3654l2.602-1.4998 2.6069 1.4998v2.9994l-2.5974 1.4997-2.6067-1.4997Z"/></svg>
<div class="t" style="left:857.0px;top:1201.4px;font-size:20.5px;color:#1f1f1f;font-weight:normal;transform:scaleX(0.933);transform-origin:0 0;-webkit-text-stroke:0.3px #1f1f1f;">GPT 4.1 mini</div>
<div style="position:absolute;left:1114.3px;top:1206.2px;width:643px;height:10px;background:#FF9350;border-radius:5px;"></div>
<div class="t" style="left:1783.8px;top:1203.3px;font-size:16.5px;color:#1f1f1f;font-weight:bold;">$37</div>
<svg style="position:absolute;left:815.3px;top:1247.1px" width="32" height="32" viewBox="0 0 28 28"><defs><linearGradient id="h2" x1="0" y1="0.5" x2="1" y2="0.5"><stop offset="0" stop-color="#9B55D6"/><stop offset="0.3" stop-color="#6B78D6"/><stop offset="0.55" stop-color="#4C8AD8"/><stop offset="1" stop-color="#1C8BE8"/></linearGradient></defs><path fill="url(#h2)" d="M14 28C14 26.0633 13.6267 24.2433 12.88 22.54C12.1567 20.8367 11.165 19.355 9.905 18.095C8.645 16.835 7.16333 15.8433 5.46 15.12C3.75667 14.3733 1.93667 14 0 14C1.93667 14 3.75667 13.6383 5.46 12.915C7.16333 12.1683 8.645 11.165 9.905 9.905C11.165 8.645 12.1567 7.16333 12.88 5.46C13.6267 3.75667 14 1.93667 14 0C14 1.93667 14.3617 3.75667 15.085 5.46C15.8317 7.16333 16.835 8.645 18.095 9.905C19.355 11.165 20.8367 12.1683 22.54 12.915C24.2433 13.6383 26.0633 14 28 14C26.0633 14 24.2433 14.3733 22.54 15.12C20.8367 15.8433 19.355 16.835 18.095 18.095C16.835 19.355 15.8433 20.8367 15.085 22.54C14.3617 24.2433 14 26.0633 14 28Z"/></svg>
<div class="t" style="left:857.0px;top:1252.8px;font-size:20.5px;color:#1f1f1f;font-weight:normal;transform:scaleX(1.0);transform-origin:0 0;-webkit-text-stroke:0.3px #1f1f1f;">Gemini 2.0 Flash</div>
<div style="position:absolute;left:1114.3px;top:1257.7px;width:514px;height:10px;background:#FFAE80;border-radius:5px;"></div>
<div class="t" style="left:1654.8px;top:1254.7px;font-size:16.5px;color:#1f1f1f;font-weight:bold;">$30</div>
<svg style="position:absolute;left:815.3px;top:1298.6px" width="32" height="32" viewBox="0 0 28 28"><defs><linearGradient id="h3" x1="0" y1="0.5" x2="1" y2="0.5"><stop offset="0" stop-color="#9B55D6"/><stop offset="0.3" stop-color="#6B78D6"/><stop offset="0.55" stop-color="#4C8AD8"/><stop offset="1" stop-color="#1C8BE8"/></linearGradient></defs><path fill="url(#h3)" d="M14 28C14 26.0633 13.6267 24.2433 12.88 22.54C12.1567 20.8367 11.165 19.355 9.905 18.095C8.645 16.835 7.16333 15.8433 5.46 15.12C3.75667 14.3733 1.93667 14 0 14C1.93667 14 3.75667 13.6383 5.46 12.915C7.16333 12.1683 8.645 11.165 9.905 9.905C11.165 8.645 12.1567 7.16333 12.88 5.46C13.6267 3.75667 14 1.93667 14 0C14 1.93667 14.3617 3.75667 15.085 5.46C15.8317 7.16333 16.835 8.645 18.095 9.905C19.355 11.165 20.8367 12.1683 22.54 12.915C24.2433 13.6383 26.0633 14 28 14C26.0633 14 24.2433 14.3733 22.54 15.12C20.8367 15.8433 19.355 16.835 18.095 18.095C16.835 19.355 15.8433 20.8367 15.085 22.54C14.3617 24.2433 14 26.0633 14 28Z"/></svg>
<div class="t" style="left:857.0px;top:1304.3px;font-size:20.5px;color:#1f1f1f;font-weight:normal;transform:scaleX(0.983);transform-origin:0 0;-webkit-text-stroke:0.3px #1f1f1f;">Gemini 2.5 Pro Preview</div>
<div style="position:absolute;left:1114.3px;top:1309.2px;width:471px;height:10px;background:#FFAE80;border-radius:5px;"></div>
<div class="t" style="left:1611.8px;top:1306.2px;font-size:16.5px;color:#1f1f1f;font-weight:bold;">$27</div>
</body></html>
